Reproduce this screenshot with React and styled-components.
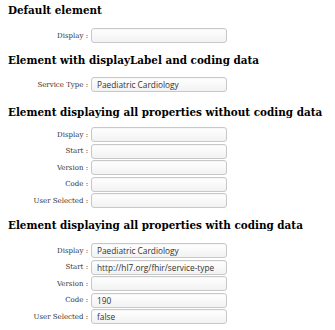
import React from "react";
import styled, { createGlobalStyle } from "styled-components";

const Global = createGlobalStyle`
  html, body { margin: 0; padding: 0; background: #fff; }
  body { font-family: "DejaVu Serif", serif; }
`;

const Page = styled.div`
  padding: 2px 8px 0 8px;
  display: flex;
  flex-direction: column;
`;

const Section = styled.section`
  display: flex;
  flex-direction: column;
  margin-bottom: ${(p) => p.$after}px;
`;

const Heading = styled.h3`
  margin: 0 0 ${(p) => p.$gap}px 0;
  font-family: "DejaVu Serif", serif;
  font-weight: bold;
  font-size: 10.4px;
  line-height: 16px;
  color: #000;
  white-space: nowrap;
`;

const Rows = styled.div`
  display: grid;
  grid-template-columns: 80px 136px;
  column-gap: 3px;
  row-gap: 1.5px;
  align-items: center;
`;

const Label = styled.label`
  font-family: "DejaVu Serif", serif;
  font-size: 7px;
  color: #333;
  text-align: right;
  white-space: nowrap;
`;

const Field = styled.div`
  box-sizing: border-box;
  height: 15px;
  border: 1px solid #c8c8c8;
  border-radius: 3px;
  background: linear-gradient(#ffffff, #f2f2f2);
  box-shadow: inset 0 1px 1px rgba(0, 0, 0, 0.04);
  font-family: "Open Sans", sans-serif;
  font-size: 8.3px;
  line-height: 13px;
  color: #333;
  padding: 0 5px;
  white-space: nowrap;
  overflow: hidden;
`;

const sections = [
  { title: "Default element", gap: 10, after: 9, rows: [["Display", ""]] },
  {
    title: "Element with displayLabel and coding data",
    gap: 9,
    after: 12,
    rows: [["Service Type", "Paediatric Cardiology"]],
  },
  {
    title: "Element displaying all properties without coding data",
    gap: 7,
    after: 9,
    rows: [
      ["Display", ""],
      ["Start", ""],
      ["Version", ""],
      ["Code", ""],
      ["User Selected", ""],
    ],
  },
  {
    title: "Element displaying all properties with coding data",
    gap: 10,
    after: 0,
    rows: [
      ["Display", "Paediatric Cardiology"],
      ["Start", "http://hl7.org/fhir/service-type"],
      ["Version", ""],
      ["Code", "190"],
      ["User Selected", "false"],
    ],
  },
];

export default function App() {
  return (
    <>
      <Global />
      <Page>
        {sections.map((s) => (
          <Section key={s.title} $after={s.after}>
            <Heading $gap={s.gap}>{s.title}</Heading>
            <Rows>
              {s.rows.map(([label, value], i) => (
                <React.Fragment key={i}>
                  <Label>{label} :</Label>
                  <Field>{value}</Field>
                </React.Fragment>
              ))}
            </Rows>
          </Section>
        ))}
      </Page>
    </>
  );
}
